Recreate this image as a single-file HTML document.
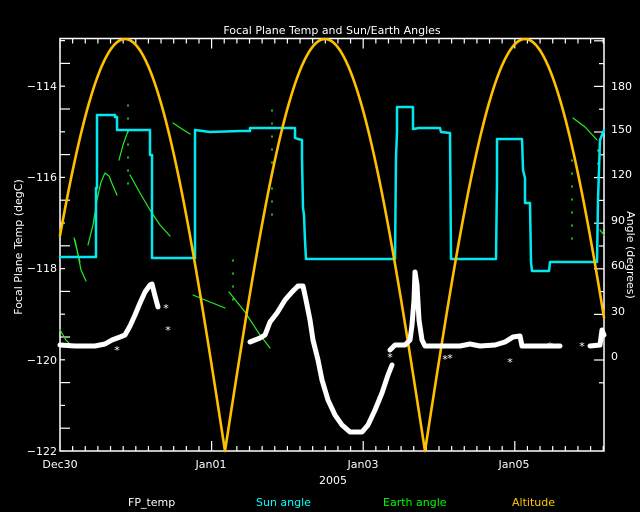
<!DOCTYPE html>
<html><head><meta charset="utf-8"><style>
html,body{margin:0;padding:0;background:#000;}
svg{display:block}
text{font-family:"DejaVu Sans","Liberation Sans",sans-serif;font-size:11px;fill:#fff}
</style></head><body>
<svg id="s" width="640" height="512" viewBox="0 0 640 512" xmlns="http://www.w3.org/2000/svg">
<rect width="640" height="512" fill="#000"/>
<text x="332" y="34" text-anchor="middle" font-size="13.5">Focal Plane Temp and Sun/Earth Angles</text>
<g id="ticks" stroke="#fff" stroke-width="1.2"></g>
<rect x="60" y="38.5" width="544" height="412.5" fill="none" stroke="#fff" stroke-width="1.5"/>
<g text-anchor="end">
<text x="57" y="90">−114</text><text x="57" y="181">−116</text><text x="57" y="272">−118</text><text x="57" y="364">−120</text><text x="57" y="455">−122</text>
</g>
<g text-anchor="start">
<text x="611" y="90">180</text><text x="611" y="133">150</text><text x="611" y="178">120</text><text x="611" y="224">90</text><text x="611" y="269">60</text><text x="611" y="315">30</text><text x="611" y="360">0</text>
</g>
<g text-anchor="middle">
<text x="60" y="468">Dec30</text><text x="211" y="468">Jan01</text><text x="363" y="468">Jan03</text><text x="514" y="468">Jan05</text>
<text x="333" y="484">2005</text>
</g>
<text transform="translate(22,247) rotate(-90)" text-anchor="middle">Focal Plane Temp (degC)</text>
<text transform="translate(627,255) rotate(90)" text-anchor="middle" font-size="10.5">Angle (degrees)</text>
<text x="128" y="506">FP_temp</text>
<text x="256" y="506" style="fill:#00ffff">Sun angle</text>
<text x="383" y="506" style="fill:#00ff00">Earth angle</text>
<text x="512" y="506" style="fill:#ffc800">Altitude</text>
<g fill="none" stroke-linejoin="round" stroke-linecap="round">
<g stroke="#22ee22" stroke-width="1.2">
<polyline points="60,330 66,340 72,346"/>
<polyline points="74,238 77,250 80,262"/>
<polyline points="75,240 81,270 86,281"/>
<polyline points="88,245 93,225 97,200 101,182 105,173 109,176 113,186 117,195"/>
<polyline points="119,160 123,145 128,131"/>
<polyline points="130,175 140,193 150,210 160,225 170,236"/>
<polyline points="173,123 182,129 190,134"/>
<polyline points="193,295 210,302 225,308"/>
<polyline points="229,292 245,312 260,335 270,348"/>
<polyline points="573,118 585,127 597,140"/>
<polyline points="600,230 604,235"/>
</g>
<g stroke="#22ee22" stroke-width="1.5" stroke-dasharray="1 12">
<line x1="128" y1="105" x2="128" y2="190"/><line x1="233" y1="260" x2="233" y2="300"/><line x1="272" y1="110" x2="272" y2="220"/><line x1="572" y1="160" x2="572" y2="240"/><line x1="598" y1="150" x2="598" y2="230"/>
</g>
<polyline stroke="#00e8f0" stroke-width="2.5" points="60,257 96,257 96,188 97,188 97,115 115,115 115,117 117,117 117,130 150,130 150,155 152,155 152,258 195,258 195,130 210,132 240,131 250,131 250,128 295,128 295,138 298,139 302,140 302,158 303,208 304,215 305,241 306,259 395,259 396,157 397,132 397,107 413,107 413,129 419,128 440,128 441,132 450,133 451,259 496,259 497,180 497,139 522,139 523,170 525,178 525,203 530,203 531,262 532,271 549,271 550,262 597,262 598,200 600,140 604,130"/>
<path id="alt" stroke="#ffc000" stroke-width="2.6" d=""/>
<g stroke="#fff" stroke-width="5">
<polyline points="60,345 75,346 95,346 105,344 112,340 120,337 125,335 130,326 135,315 140,303 145,292 150,285 152,284 155,296 158,307"/>
<polyline points="250,342 260,338 265,335 270,322 277,313 285,300 292,292 298,286 303,286 306,300 310,320 313,340 318,360 322,380 328,400 335,415 342,425 350,432 362,432 368,425 375,410 382,393 388,375 392,365"/>
<polyline points="390,350 395,345 405,345 410,340 412,325 414,300 415,272 417,285 419,320 422,340 425,346 460,346 470,344 480,346 495,345 505,342 513,337 520,336 522,346 560,346"/>
<polyline points="590,346 600,345 602,330 604,335"/>
</g>
</g>
<g fill="#fff" font-size="10" text-anchor="middle">
<text x="98" y="351">*</text><text x="117" y="354">*</text><text x="166" y="312">*</text><text x="168" y="334">*</text>
<text x="390" y="361">*</text><text x="445" y="363">*</text><text x="450" y="362">*</text><text x="550" y="350">*</text><text x="582" y="350">*</text><text x="510" y="366">*</text>
</g>
</svg>
<script>
(function(){
var ns="http://www.w3.org/2000/svg",g=document.getElementById("ticks");
function L(x1,y1,x2,y2){var l=document.createElementNS(ns,"line");l.setAttribute("x1",x1);l.setAttribute("y1",y1);l.setAttribute("x2",x2);l.setAttribute("y2",y2);g.appendChild(l);}
var d=75.8;
for(var i=0;i*d/6<=545;i++){var x=60+i*d/6;var maj=(i%12==0);var len=maj?10:5;L(x,451,x,451-len);L(x,38.5,x,38.5+len);}
for(var v=0;v<=18;v++){var y=451-v*22.8;if(y<38)break;var len=(v%2==1)?10:5;L(60,y,60+len,y);}
for(var a=-15;a<=210;a+=15){var y=360-a*45.6/30;if(y<38||y>451)continue;var len=(a%30==0)?10:5;L(604,y,604-len,y);}
var pts=[];
for(var x=60;x<=604;x+=1){var ph=((x-25)%200+200)%200;var t=ph<=100?ph/100:(200-ph)/100;var y=451-412*Math.sin(t*Math.PI/2);pts.push((pts.length?"L":"M")+x+","+y.toFixed(1));}
document.getElementById("alt").setAttribute("d",pts.join(" "));
})();
</script>
</body></html>
